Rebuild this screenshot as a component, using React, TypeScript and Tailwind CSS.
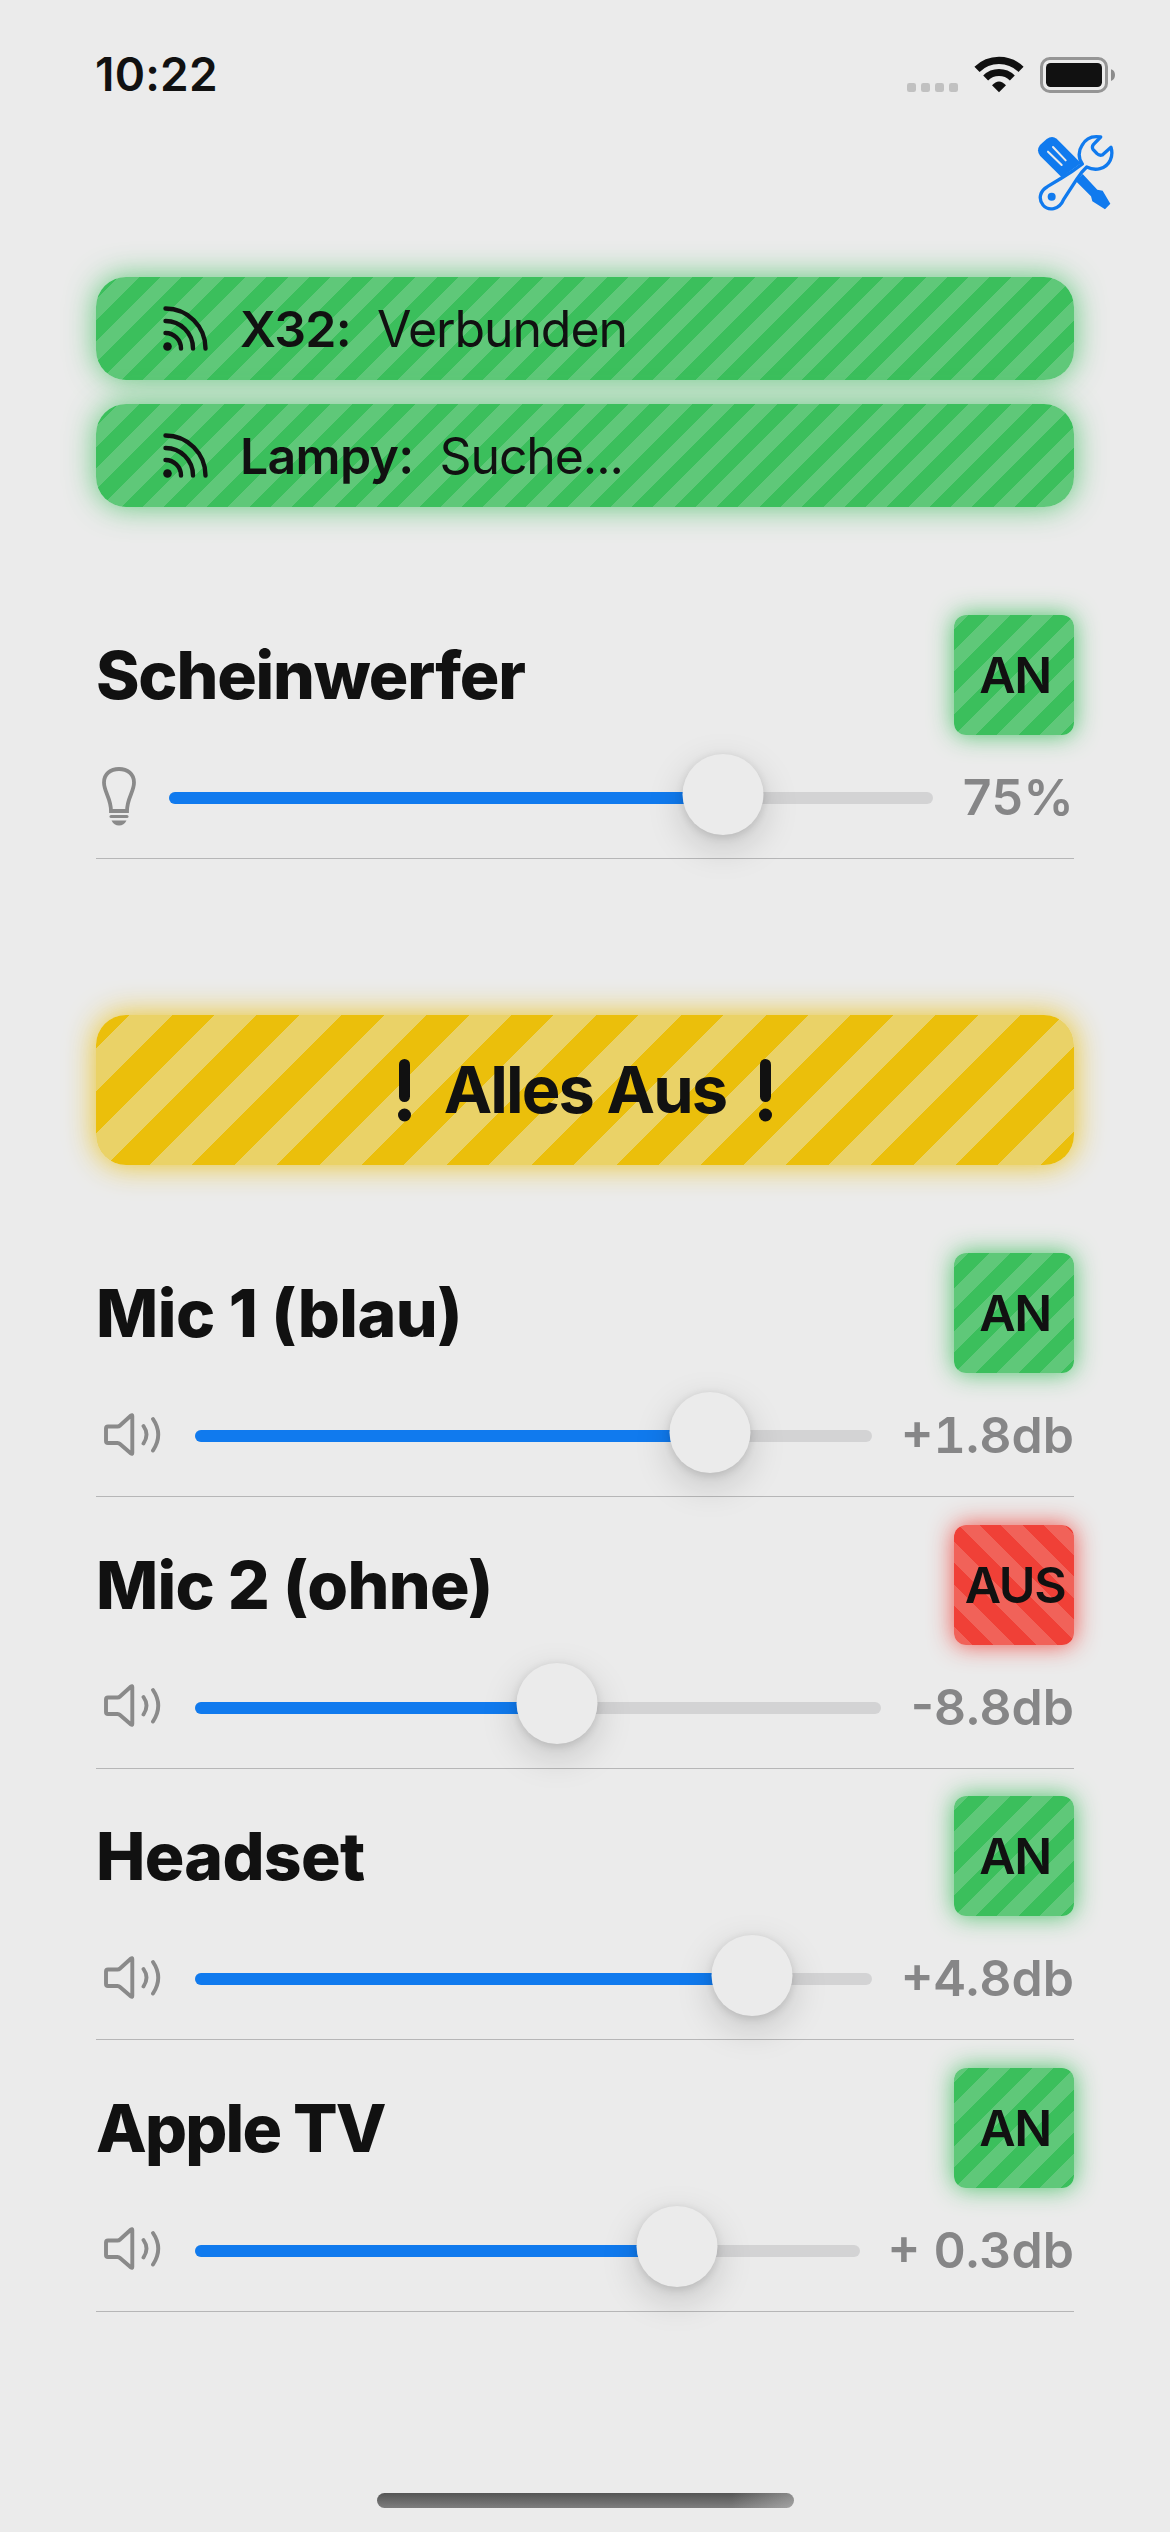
import React from "react";

const GREEN =
  "bg-[repeating-linear-gradient(135deg,#5fc879_0px,#5fc879_0.6px,#3bbf5c_0.6px,#3bbf5c_15.6px,#5fc879_15.6px,#5fc879_30.07px)] shadow-[0_0_30px_rgba(59,191,92,0.8)]";
const GREEN_SQUARE =
  "bg-[repeating-linear-gradient(135deg,#5fc879_0px,#5fc879_10.2px,#3bbf5c_10.2px,#3bbf5c_25.2px,#5fc879_25.2px,#5fc879_30px)] shadow-[0_0_24px_rgba(59,191,92,0.9)]";
const RED_SQUARE =
  "bg-[repeating-linear-gradient(45deg,#f16259_0px,#f16259_13px,#f04037_13px,#f04037_28px,#f16259_28px,#f16259_30px)] shadow-[0_0_24px_rgba(240,64,55,0.9)]";
const YELLOW =
  "bg-[repeating-linear-gradient(135deg,#ebbf0b_0px,#ebbf0b_23.8px,#ead267_23.8px,#ead267_53.8px,#ebbf0b_53.8px,#ebbf0b_60px)] shadow-[0_0_30px_rgba(235,191,11,0.9)]";

function StatusBar() {
  return (
    <header className="flex h-[120px] justify-between pl-[95px] pr-[54px] pt-[56px]">
      <span className="h-10 text-[46px] font-semibold leading-[37px] tracking-[0.2px]">10:22</span>
      <svg className="h-[37px] w-[210px]" viewBox="78 75 630 111">
        <g fill="#c1c1c1">
          <rect x="81" y="156" width="27" height="27" rx="7" />
          <rect x="123" y="156" width="27" height="27" rx="7" />
          <rect x="165" y="156" width="27" height="27" rx="7" />
          <rect x="207" y="156" width="27" height="27" rx="7" />
        </g>
        <g fill="none" stroke="#111">
          <path d="M291 115 A94 94 0 0 1 423 115" strokeWidth="22" />
          <path d="M317 141 A57 57 0 0 1 397 141" strokeWidth="21" />
        </g>
        <path d="M336 163 Q357 140 378 163 L357 184 Z" fill="#111" />
        <rect x="484.500" y="82.500" width="195" height="99" rx="25" fill="none" stroke="#959595" strokeWidth="9" />
        <rect x="498" y="96" width="168" height="72" rx="14" fill="#111" />
        <path d="M693 115 Q705 119 705 132 Q705 146 693 150 Z" fill="#8c8c8c" />
      </svg>
    </header>
  );
}

function ToolsIcon() {
  return (
    <svg className="h-[78px] w-[78px]" viewBox="471 309 234 234">
      <path d="M480 345 L500 327 Q516 315 530 326 L603 400 L545 442 L480 377 Q468 361 480 345 Z" fill="#107aee" />
      <path d="M519 351 L557 391 M504 365 L545 405" stroke="#ebebeb" strokeWidth="6" strokeLinecap="round" />
      <path d="M588 454 L608 432 L652 479 L668 482 L691 521 L675 538 L637 514 L633 499 Z" fill="#107aee" />
      <path
        d="M662 321 L640 344 Q635 350 639 358 L651 371 Q658 378 667 375 L693 352 C701 378 690 408 660 416 C645 420 632 417 620 411 C610 420 600 432 590 448 L551 508 C538 540 505 544 489 525 C473 505 482 481 502 470 L545 444 Q575 427 607 402 C594 385 595 362 606 346 C618 324 640 317 662 321 Z"
        fill="#ebebeb"
        stroke="#107aee"
        strokeWidth="10"
        strokeLinejoin="round"
      />
      <circle cx="515" cy="500" r="12" fill="#107aee" />
    </svg>
  );
}

function FeedIcon() {
  return (
    <svg className="h-[45px] w-[45px] shrink-0" viewBox="0 0 45 45">
      <circle cx="4.500" cy="40.500" r="4.300" fill="#111" />
      <path d="M2.500 27 A15.500 15.500 0 0 1 18 42.500 M2.500 15 A27.500 27.500 0 0 1 30 42.500 M2.500 2.500 A40 40 0 0 1 42.500 42.500" fill="none" stroke="#111" strokeWidth="4.400" strokeLinecap="round" />
    </svg>
  );
}

function StatusRow({ name, state }: { name: string; state: string }) {
  return (
    <div className={`flex h-[103px] items-center rounded-[30px] pl-[67px] text-[50px] leading-none ${GREEN}`}>
      <FeedIcon />
      <span className="ml-8 font-semibold tracking-[-0.7px]">{name}</span>
      <span className="ml-[26px] tracking-[-1.1px]">{state}</span>
    </div>
  );
}

function BulbIcon() {
  return (
    <svg className="relative -top-[2px] ml-[6px] h-[59px] w-[34px] shrink-0" viewBox="0 0 34 59">
      <path d="M9 44 L25 44 C25 31 32 25 32 15.500 C32 7 25.500 2 17 2 C8.500 2 2 7 2 15.500 C2 25 9 31 9 44 Z" fill="none" stroke="#8a8a8a" strokeWidth="3.800" />
      <path d="M9 49.500 H25" stroke="#8a8a8a" strokeWidth="3" strokeLinecap="round" />
      <path d="M9.500 53.500 H24.500 Q22 58.500 17 58.500 Q12 58.500 9.500 53.500 Z" fill="#8a8a8a" />
    </svg>
  );
}

function SpeakerIcon() {
  return (
    <svg className="relative -top-[2px] ml-2 h-[45px] w-[57px] shrink-0" viewBox="0 0 57 45" fill="none" stroke="#8a8a8a" strokeWidth="3.900" strokeLinecap="round" strokeLinejoin="round">
      <path d="M4 14.500 H13.500 Q15 14.500 16 13.500 L27 3.500 Q28.300 2.500 28.300 4 V41 Q28.300 42.500 27 41.500 L16 32 Q15 31 13.500 31 H4 Q2 31 2 29 V16.500 Q2 14.500 4 14.500 Z" />
      <path d="M39.500 14 Q45.500 22.500 39.500 31.500 M49 7 Q59.500 22.500 49 38.500" />
    </svg>
  );
}

type ChannelProps = {
  title: string;
  titleSpacing: string;
  on: boolean;
  value: string;
  fill: number;
  icon: "bulb" | "speaker";
  valueStyle: string;
};

function Channel({ title, titleSpacing, on, value, fill, icon, valueStyle }: ChannelProps) {
  return (
    <section className="border-b border-[#b6b6b7]">
      <div className="flex h-[120px] items-center justify-between">
        <h2 className={`text-[66px] font-extrabold leading-none ${titleSpacing}`}>{title}</h2>
        <button className={`flex size-[120px] items-center justify-center rounded-xl pl-[2px] text-[50px] font-semibold leading-none tracking-[-1.4px] ${on ? GREEN_SQUARE : RED_SQUARE}`}>
          {on ? "AN" : "AUS"}
        </button>
      </div>
      <div className="mb-5 mt-[23px] flex h-20 items-center">
        {icon === "bulb" ? <BulbIcon /> : <SpeakerIcon />}
        <div className={`relative h-3 flex-1 rounded-full bg-[#d3d3d4] ${icon === "bulb" ? "ml-[33px]" : "ml-[34px]"}`}>
          <div className="h-3 rounded-full bg-[#107aee]" style={{ width: fill }} />
          <div
            className="absolute -top-[38.500px] size-[81px] -translate-x-1/2 rounded-full bg-[#ebebeb] shadow-[0_12px_36px_rgba(0,0,0,0.17),0_2px_8px_rgba(0,0,0,0.12)]"
            style={{ left: fill }}
          />
        </div>
        <span className={`mb-[2px] shrink-0 whitespace-nowrap text-right text-[50px] font-semibold leading-none text-[#868687] ${valueStyle}`}>{value}</span>
      </div>
    </section>
  );
}

function Exclamation() {
  return (
    <svg className="h-[63px] w-[13px]" viewBox="0 0 13 63" fill="#111">
      <rect x="1" width="11" height="43" rx="5.500" />
      <circle cx="6.500" cy="56" r="6.500" />
    </svg>
  );
}

export default function App() {
  return (
    <div className="flex h-[2532px] w-[1170px] flex-col overflow-hidden bg-[#ebebeb] font-['Inter',sans-serif] text-[#111]">
      <StatusBar />
      <div className="mt-[13px] flex justify-end pr-[55px]">
        <ToolsIcon />
      </div>
      <main className="mt-[66px] px-24">
        <div className="flex flex-col gap-6">
          <StatusRow name="X32:" state="Verbunden" />
          <StatusRow name="Lampy:" state="Suche..." />
        </div>
        <div className="mt-[108px]">
          <Channel title="Scheinwerfer" titleSpacing="tracking-[-1.2px]" on value="75%" fill={553.5} icon="bulb" valueStyle="w-[141px] tracking-[0.4px]" />
        </div>
        <button className={`mt-[156px] flex h-[150px] w-full items-center justify-center gap-[33px] rounded-[30px] ${YELLOW}`}>
          <Exclamation />
          <span className="mb-[2px] text-[65px] font-bold leading-none tracking-[-1.9px]">Alles Aus</span>
          <Exclamation />
        </button>
        <div className="mt-[88px] flex flex-col gap-[27.600px]">
          <Channel title="Mic 1 (blau)" titleSpacing="tracking-[-0.5px]" on value="+1.8db" fill={514.5} icon="speaker" valueStyle="w-[202px] tabular-nums" />
          <Channel title="Mic 2 (ohne)" titleSpacing="tracking-[-0.7px]" on={false} value="-8.8db" fill={362} icon="speaker" valueStyle="w-[193px]" />
          <Channel title="Headset" titleSpacing="tracking-[-0.7px]" on value="+4.8db" fill={556.5} icon="speaker" valueStyle="w-[202px] tabular-nums" />
          <Channel title="Apple TV" titleSpacing="tracking-[-1.8px]" on value="+ 0.3db" fill={481.5} icon="speaker" valueStyle="w-[214px] tabular-nums" />
        </div>
      </main>
      <div className="mx-auto mb-6 mt-auto h-[15px] w-[417px] rounded-full bg-[linear-gradient(to_right,transparent_85%,rgba(235,235,235,0.35)),linear-gradient(#555,#7e7e7e)]" />
    </div>
  );
}
